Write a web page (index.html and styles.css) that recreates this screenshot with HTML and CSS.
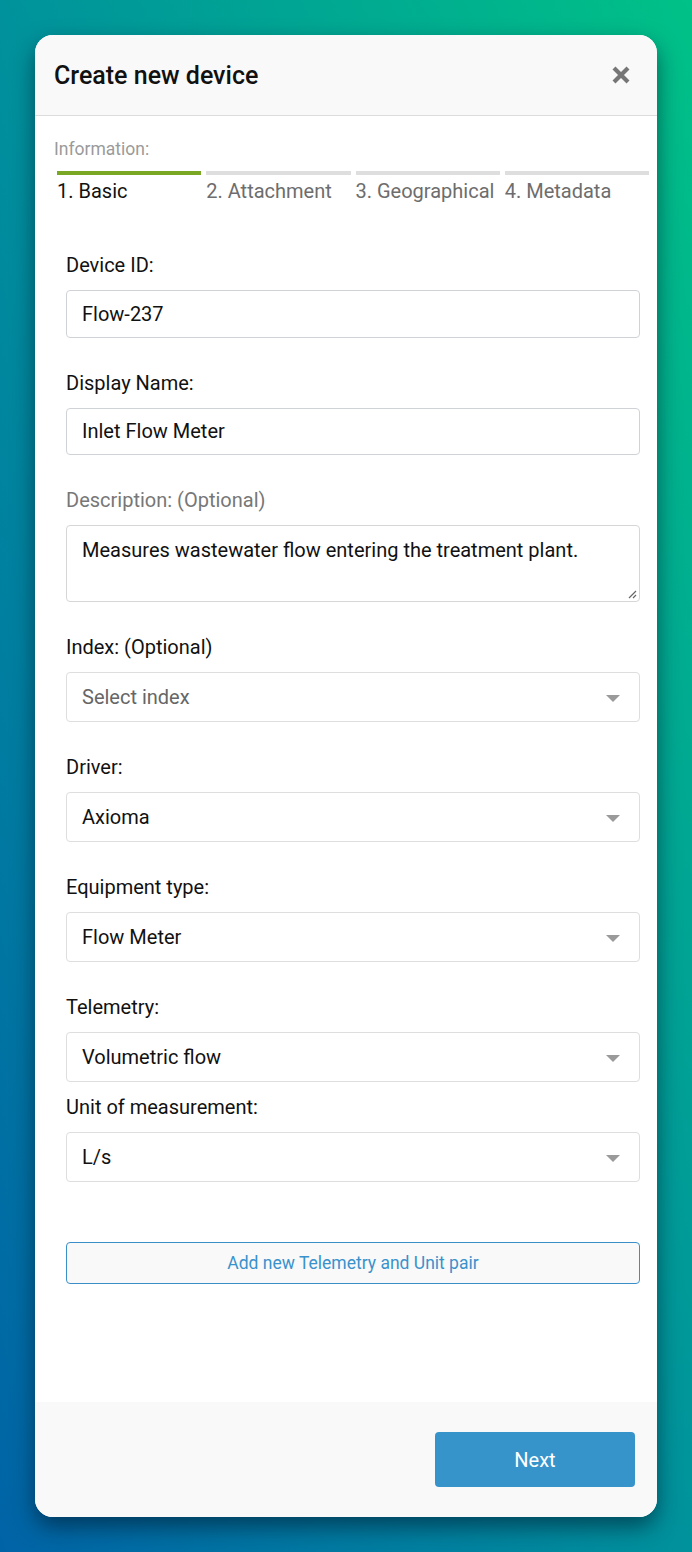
FILE: index.html
```html
<!DOCTYPE html>
<html lang="en">
<head>
<meta charset="utf-8">
<title>Create new device</title>
<link rel="stylesheet" href="styles.css">
</head>
<body>
<div class="page">
  <div class="card">
    <div class="card-header">
      <h1 class="title">Create new device</h1>
      <button class="close" aria-label="Close">
        <svg width="20" height="20" viewBox="0 0 20 20"><path d="M3 3 L17 17 M17 3 L3 17" stroke="#767676" stroke-width="4.2" stroke-linecap="butt" fill="none"/></svg>
      </button>
    </div>
    <div class="card-body">
      <div class="info-label">Information:</div>
      <div class="stepper">
        <div class="step active"><div class="bar"></div><span>1. Basic</span></div>
        <div class="step"><div class="bar"></div><span>2. Attachment</span></div>
        <div class="step"><div class="bar"></div><span>3. Geographical</span></div>
        <div class="step"><div class="bar"></div><span>4. Metadata</span></div>
      </div>
      <form class="form">
        <div class="field">
          <label class="label">Device ID:</label>
          <div class="input">Flow-237</div>
        </div>
        <div class="field">
          <label class="label">Display Name:</label>
          <div class="input">Inlet Flow Meter</div>
        </div>
        <div class="field">
          <label class="label muted">Description: (Optional)</label>
          <div class="textarea">Measures wastewater flow entering the treatment plant.
            <svg class="grip" width="10" height="10" viewBox="0 0 10 10"><path d="M9 2 L2 9 M9 6 L6 9" stroke="#666" stroke-width="1.2"/></svg>
          </div>
        </div>
        <div class="field">
          <label class="label">Index: (Optional)</label>
          <div class="select placeholder">Select index<span class="caret"></span></div>
        </div>
        <div class="field">
          <label class="label">Driver:</label>
          <div class="select">Axioma<span class="caret"></span></div>
        </div>
        <div class="field">
          <label class="label">Equipment type:</label>
          <div class="select">Flow Meter<span class="caret"></span></div>
        </div>
        <div class="field tight">
          <label class="label">Telemetry:</label>
          <div class="select">Volumetric flow<span class="caret"></span></div>
        </div>
        <div class="field">
          <label class="label">Unit of measurement:</label>
          <div class="select">L/s<span class="caret"></span></div>
        </div>
        <button type="button" class="add-btn">Add new Telemetry and Unit pair</button>
      </form>
    </div>
    <div class="card-footer">
      <button class="next-btn">Next</button>
    </div>
  </div>
</div>
</body>
</html>
```

FILE: styles.css
```css
* { box-sizing: border-box; }
html, body { margin: 0; padding: 0; }
body {
  width: 692px;
  height: 1552px;
  font-family: Roboto, "Liberation Sans", Arial, sans-serif;
  background: linear-gradient(to top right, #0063a6 0%, #00929c 50%, #00c187 100%);
  overflow: hidden;
}
.page {
  padding: 35px 35px 35px 35px;
}
.card {
  width: 622px;
  height: 1482px;
  background: #fff;
  border-radius: 18px;
  overflow: hidden;
  display: flex;
  flex-direction: column;
  box-shadow: 0 10px 22px rgba(0, 20, 40, 0.55);
}
.card-header {
  height: 81px;
  background: #f9f9f9;
  border-bottom: 1px solid #dcdcdc;
  display: flex;
  align-items: center;
  justify-content: space-between;
  padding: 0 26px 0 19px;
  flex-shrink: 0;
}
.title {
  margin: 0;
  font-size: 25px;
  font-weight: 500;
  color: #111;
}
.close {
  border: 0;
  background: none;
  padding: 0;
  width: 20px;
  height: 20px;
  cursor: pointer;
  display: flex;
}
.card-body {
  flex: 1;
  padding: 22px 0 0 0;
}
.info-label {
  padding-left: 19px;
  font-size: 17.5px;
  line-height: 22px;
  color: #9a9a9a;
}
.stepper {
  display: grid;
  grid-template-columns: repeat(4, 1fr);
  column-gap: 5px;
  padding: 11px 8px 0 22px;
}
.step .bar {
  height: 4px;
  background: #dedede;
}
.step.active .bar { background: #7aa824; }
.step span {
  display: block;
  margin-top: 4px;
  font-size: 20px;
  line-height: 24px;
  color: #6d6d6d;
  white-space: nowrap;
}
.step.active span { color: #111; }
.form {
  margin: 50px 17px 0 31px;
  display: flex;
  flex-direction: column;
}
.field {
  display: flex;
  flex-direction: column;
  margin-bottom: 33px;
}
.field.tight { margin-bottom: 13px; }
.label {
  font-size: 20px;
  line-height: 25px;
  color: #111;
  margin-bottom: 12px;
}
.label.muted { color: #777; }
.input, .select, .textarea {
  border: 1px solid #d6d6d6;
  border-radius: 4px;
  background: #fff;
  font-size: 20px;
  color: #111;
  padding: 0 15px;
}
.input {
  height: 47.5px;
  display: flex;
  align-items: center;
  border-color: #cfd3d8;
}
.textarea {
  position: relative;
  height: 77px;
  padding-top: 12px;
  line-height: 24px;
}
.grip {
  position: absolute;
  right: 2px;
  bottom: 2px;
}
.select {
  position: relative;
  height: 50px;
  display: flex;
  align-items: center;
  border-color: #dedede;
}
.select.placeholder { color: #666; }
.caret {
  position: absolute;
  right: 19px;
  top: 22px;
  width: 0;
  height: 0;
  border-left: 7px solid transparent;
  border-right: 7px solid transparent;
  border-top: 7px solid #9a9a9a;
}
.add-btn {
  margin-top: 27px;
  height: 42px;
  border: 1px solid #3b8fc9;
  border-radius: 4px;
  background: #f9f9f9;
  color: #3a92cc;
  font-family: inherit;
  font-size: 17.5px;
  cursor: pointer;
}
.card-footer {
  height: 115px;
  background: #f9f9f9;
  flex-shrink: 0;
  display: flex;
  justify-content: flex-end;
  padding: 30px 22px 0 0;
}
.next-btn {
  width: 200px;
  height: 55px;
  border: 0;
  border-radius: 4px;
  background: #3794cb;
  color: #fff;
  font-family: inherit;
  font-size: 20px;
  font-weight: 400;
  cursor: pointer;
}
```
